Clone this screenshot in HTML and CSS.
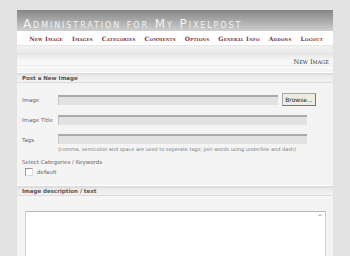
FILE: index.html
```html
<!DOCTYPE html>
<html lang="en">
<head>
    <meta charset="UTF-8">
    <title>Administration for My Pixelpost</title>
    <link rel="stylesheet" href="styles.css">
</head>
<body>
    <div class="wrap">
        <div class="header">
            <h1>Administration for My Pixelpost</h1>
        </div>
        <div class="nav">
            <a href="#">New Image</a>
            <a href="#">Images</a>
            <a href="#">Categories</a>
            <a href="#">Comments</a>
            <a href="#">Options</a>
            <a href="#">General Info</a>
            <a href="#">Addons</a>
            <a href="#">Logout</a>
        </div>
        <div class="band"></div>
        <div class="crumb">New Image</div>
        <div class="section-title">Post a New Image</div>
        <div class="form">
            <div class="row">
                <label>Image</label>
                <div class="field file">
                    <div class="input"></div>
                    <button class="browse">Browse...</button>
                </div>
            </div>
            <div class="row">
                <label>Image Title</label>
                <div class="field"><div class="input"></div></div>
            </div>
            <div class="row tags">
                <label>Tags</label>
                <div class="field">
                    <div class="input"></div>
                    <p class="note">(comma, semicolon and space are used to seperate tags; join words using underline and dash)</p>
                </div>
            </div>
            <p class="cats">Select Categories / Keywords</p>
            <div class="check"><span class="box"></span>default</div>
        </div>
        <div class="section-title">Image description / text</div>
        <div class="desc">
            <div class="textarea">
                <span class="arrow up"></span>
            </div>
        </div>
    </div>
</body>
</html>
```

FILE: styles.css
```css
* {
    margin: 0;
    padding: 0;
    box-sizing: border-box;
}
body {
    background: #e3e3e3;
    font-family: "DejaVu Sans", Verdana, sans-serif;
    font-size: 5.5px;
    color: #555;
    padding-top: 10px;
}
.wrap {
    margin-left: 17px;
    width: 316px;
    background: #f4f4f4;
    height: 246px;
    overflow: hidden;
}
.header {
    height: 21px;
    background: linear-gradient(to bottom, #858585, #a9a9a9 50%, #cfcfcf);
    padding: 8px 0 0 6px;
}
.header h1 {
    font-family: "DejaVu Sans", Verdana, sans-serif;
    font-variant: small-caps;
    font-size: 12px;
    font-weight: normal;
    letter-spacing: 1.9px;
    color: #f2f2f2;
    line-height: 12px;
}
.nav {
    height: 14px;
    background: #fff;
    display: flex;
    justify-content: center;
    align-items: center;
    gap: 9px;
    padding-left: 2px;
}
.nav a {
    font-family: "DejaVu Serif", Georgia, serif;
    font-variant: small-caps;
    font-weight: bold;
    font-size: 6px;
    color: #80303a;
    text-decoration: none;
    letter-spacing: 0.2px;
}
.band {
    height: 8px;
    background: linear-gradient(to bottom, #f2f2f2, #e9e9e9);
    border-top: 1px solid #e6e6e6;
}
.crumb {
    height: 15px;
    background: linear-gradient(to bottom, #e2e2e2, #fafafa 60%, #f0f0f0);
    text-align: right;
    padding: 5px 4px 0 0;
    font-family: "DejaVu Serif", Georgia, serif;
    font-variant: small-caps;
    font-size: 6.5px;
    color: #333;
    border-bottom: 1px solid #fff;
}
.section-title {
    height: 11px;
    margin-top: 4px;
    background: linear-gradient(to bottom, #d8d8d8, #ececec 40%, #f2f2f2);
    border-top: 1px solid #fff;
    border-bottom: 1px solid #dcdcdc;
    padding: 2px 0 0 5px;
    font-weight: bold;
    color: #555;
    font-size: 5.5px;
}
.form {
    padding: 10px 0 5px 5px;
}
.row {
    display: flex;
    align-items: center;
    margin-bottom: 9px;
}
.row label {
    width: 36px;
    color: #666;
}
.field {
    width: 249px;
}
.field.file {
    display: flex;
    align-items: center;
    gap: 4px;
    width: 258px;
}
.input {
    height: 10px;
    background: #e2e2e2;
    border-top: 2px solid #aaa;
    border-left: 1px solid #c4c4c4;
    width: 100%;
}
.file .input {
    width: 220px;
}
.browse {
    width: 34px;
    height: 13px;
    background: #efeddf;
    border: 1px solid #aaa;
    border-right-color: #777;
    border-bottom-color: #777;
    font-family: "DejaVu Sans", Verdana, sans-serif;
    font-size: 6px;
    color: #222;
}
.row.tags {
    align-items: flex-start;
    margin-top: 2px;
    margin-bottom: 7px;
}
.row.tags label {
    padding-top: 3px;
}
.note {
    margin-top: 2px;
    color: #777;
    font-size: 5px;
    white-space: nowrap;
}
.cats {
    color: #666;
    margin-bottom: 3px;
}
.check {
    display: flex;
    align-items: center;
    gap: 4px;
    padding-left: 3px;
    color: #666;
}
.box {
    width: 8px;
    height: 8px;
    background: #fff;
    border: 1px solid #999;
    border-right-color: #ddd;
    border-bottom-color: #ddd;
}
.desc {
    padding: 15px 0 0 8px;
}
.textarea {
    position: relative;
    width: 301px;
    height: 60px;
    background: #fff;
    border: 1px solid #cfcfcf;
    border-top-color: #b8b8b8;
}
.arrow {
    position: absolute;
    right: 3px;
    top: 2px;
    width: 0;
    height: 0;
    border-left: 2px solid transparent;
    border-right: 2px solid transparent;
    border-bottom: 2px solid #bbb;
}
```
